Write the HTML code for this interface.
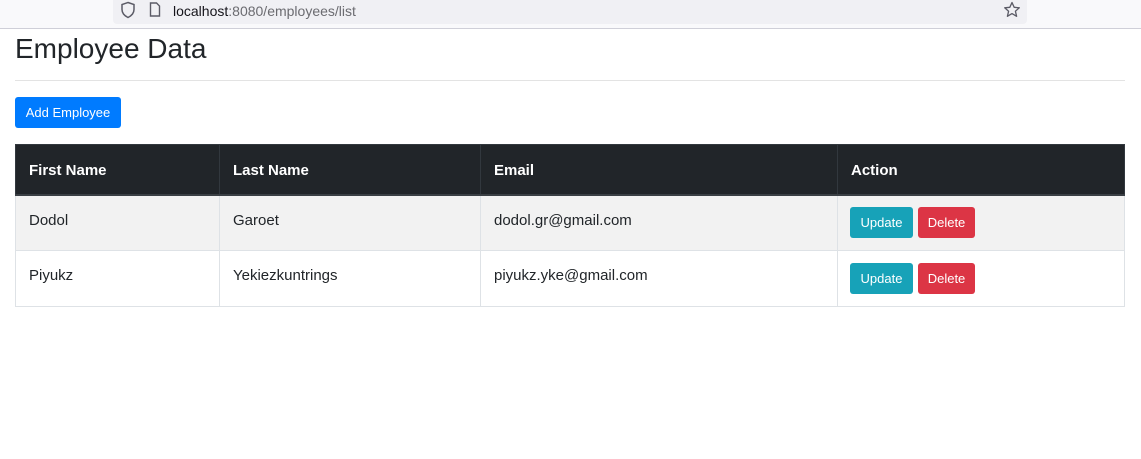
<!DOCTYPE html>
<html><head><style>
*{box-sizing:border-box;margin:0;padding:0}
body{width:1141px;height:459px;background:#fff;font-family:"Liberation Sans",sans-serif;color:#212529;position:relative;overflow:hidden}
.bar{position:absolute;left:0;top:0;width:1141px;height:29px;background:#f9f9fb;border-bottom:1px solid #cfcfd8}
.url{position:absolute;left:113px;top:0;width:914px;height:24px;background:#f0f0f4;border-radius:0 0 4px 4px}
.url span{position:absolute;left:60px;top:3px;font-size:14px;color:#15141a}
.url span i{font-style:normal;color:#6b6b70}
h1{position:absolute;left:15px;top:33px;font-size:28px;font-weight:400}
.hr{position:absolute;left:15px;top:80px;width:1110px;border-top:1px solid #e3e3e3}
.btn{position:absolute;color:#fff;font-size:13px;border-radius:3px;text-align:center}
table{position:absolute;left:15px;top:144px;width:1110px;border-collapse:collapse;font-size:15px}
th,td{border:1px solid #dee2e6;text-align:left;padding:0 13px;position:relative}
th{background:#212529;color:#fff;height:50px;border-color:#32383e;border-bottom:2px solid #3a3f44;padding-top:2px}
tr.a td{background:#f2f2f2}
td{height:56px;vertical-align:top;padding-top:16px}
</style></head><body>
<div class="bar"><div class="url">
<svg style="position:absolute;left:7px;top:1px" width="16" height="18" viewBox="0 0 16 18"><path d="M8 1.5 L14 3.5 V8.5 C14 12.5 11 15 8 16.5 C5 15 2 12.5 2 8.5 V3.5 Z" fill="none" stroke="#5b5b66" stroke-width="1.5"/></svg>
<svg style="position:absolute;left:36px;top:2px" width="12" height="15" viewBox="0 0 12 15"><path d="M1.5 1 H7.5 L10.5 4 V14 H1.5 Z" fill="none" stroke="#5b5b66" stroke-width="1.4"/></svg>
<span>localhost<i>:8080/employees/list</i></span>
<svg style="position:absolute;left:890px;top:1px" width="18" height="18" viewBox="0 0 18 18"><path d="M9 1.5 L11.2 6.3 L16.3 6.8 L12.4 10.2 L13.6 15.3 L9 12.6 L4.4 15.3 L5.6 10.2 L1.7 6.8 L6.8 6.3 Z" fill="none" stroke="#5b5b66" stroke-width="1.3" stroke-linejoin="round"/></svg>
</div></div>
<h1>Employee Data</h1>
<div class="hr"></div>
<div class="btn" style="left:15px;top:97px;width:106px;height:31px;line-height:31px;background:#007bff">Add Employee</div>
<table>
<tr><th style="width:204px">First Name</th><th style="width:261px">Last Name</th><th style="width:357px">Email</th><th>Action</th></tr>
<tr class="a"><td>Dodol</td><td>Garoet</td><td>dodol.gr@gmail.com</td><td></td></tr>
<tr><td>Piyukz</td><td>Yekiezkuntrings</td><td>piyukz.yke@gmail.com</td><td></td></tr>
</table>
<div class="btn" style="left:850px;top:207px;width:63px;height:31px;line-height:31px;background:#17a2b8">Update</div>
<div class="btn" style="left:918px;top:207px;width:57px;height:31px;line-height:31px;background:#dc3545">Delete</div>
<div class="btn" style="left:850px;top:263px;width:63px;height:31px;line-height:31px;background:#17a2b8">Update</div>
<div class="btn" style="left:918px;top:263px;width:57px;height:31px;line-height:31px;background:#dc3545">Delete</div>
</body></html>
